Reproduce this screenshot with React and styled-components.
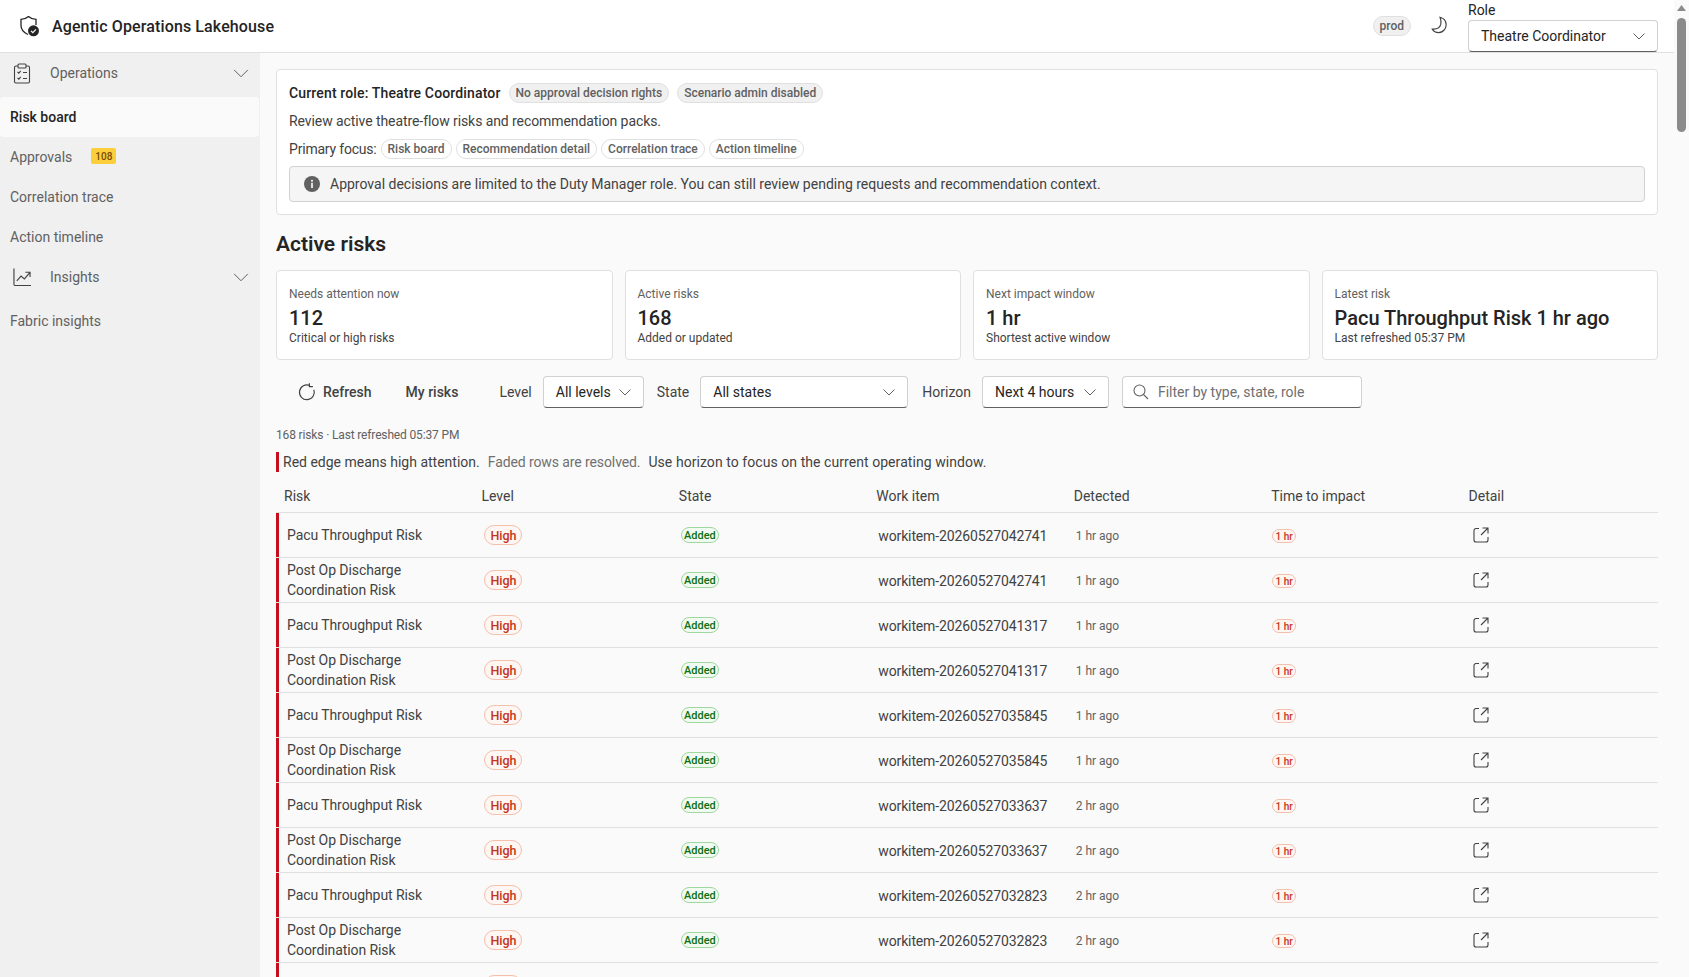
import React from "react";
import styled, { createGlobalStyle } from "styled-components";

const Global = createGlobalStyle`
  html, body { margin: 0; padding: 0; height: 100%; overflow: hidden; background: #fafafa; }
  body { font-family: "Roboto", "Liberation Sans", sans-serif; font-size: 14px; color: #424242; }
  * { box-sizing: border-box; }
`;

const Shell = styled.div`display: grid; grid-template-columns: 1fr 15px; height: 100vh; overflow: hidden;`;
const Page = styled.div`display: flex; flex-direction: column; min-width: 0; height: 100%;`;

const TopBar = styled.header`
  display: flex; align-items: flex-start; height: 53px; flex: none; background: #fff; border-bottom: 1px solid #e0e0e0;
  padding: 0 16px 0 18px;
`;
const Brand = styled.div`display: flex; align-items: center; gap: 12px; height: 52px; flex: 1;`;
const BrandTitle = styled.div`font-size: 16px; font-weight: 500; color: #242424; letter-spacing: 0.12px;`;
const EnvChip = styled.div`
  height: 20px; margin-top: 16px; padding: 0 6px; display: flex; align-items: center; border-radius: 10px;
  background: #f0f0f0; border: 1px solid #e0e0e0; color: #616161; font-size: 12px; font-weight: 500;
`;
const ThemeButton = styled.div`display: flex; margin: 16px 20px 0 20px; color: #424242;`;
const RoleField = styled.div`display: flex; flex-direction: column; width: 190px;`;
const RoleLabel = styled.div`font-size: 14px; line-height: 20px; color: #242424;`;

const Select = styled.div`
  display: flex; align-items: center; justify-content: space-between; height: 32px; width: ${p => p.$w}px; flex: none;
  padding: 0 10px 0 12px; background: #fff; border: 1px solid #d1d1d1; border-bottom-color: #616161; border-radius: 4px;
  color: #242424; font-size: 14px;
`;

const Body = styled.div`display: grid; grid-template-columns: 260px 1fr; flex: 1; min-height: 0;`;
const Side = styled.nav`background: #f0f0f0; display: flex; flex-direction: column; overflow: hidden;`;
const GroupHead = styled.div`
  display: flex; align-items: center; height: 40px; margin-bottom: 4px; padding: 0 9px 0 13px; color: #616161; font-size: 14px;
`;
const GroupLabel = styled.span`flex: 1; margin-left: 19px;`;
const NavItem = styled.div`
  display: flex; align-items: center; height: 40px; padding-left: 10px; margin-right: 1px; border-radius: 4px; font-size: 14px;
  color: ${p => (p.$active ? "#242424" : "#616161")};
  background: ${p => (p.$active ? "#fafafa" : "transparent")};
  font-weight: ${p => (p.$active ? 500 : 400)};
`;
const CountBadge = styled.span`
  margin: -2px 0 0 19px; height: 16px; padding: 0 4px; display: inline-flex; align-items: center; border-radius: 2px;
  background: #fbce3c; color: #7a4a00; font-size: 10px; font-weight: 500;
`;

const Main = styled.main`padding: 16px 16px 0; min-width: 0; overflow: hidden;`;
const RoleCard = styled.section`
  background: #fff; border: 1px solid #e0e0e0; border-radius: 4px; padding: 13px 12px 0; height: 146px;
`;
const InfoLine = styled.div`display: flex; align-items: center; gap: ${p => p.$gap || 8}px; height: 20px; margin-bottom: 8px; white-space: nowrap;`;
const Strong = styled.span`font-weight: 500; color: #242424; font-size: 14px; letter-spacing: 0.15px;`;
const Sentence = styled.span`letter-spacing: -0.08px;`;
const Focus = styled.span`color: #424242; letter-spacing: -0.2px;`;
const Chip = styled.span`
  display: inline-flex; align-items: center; height: 20px; padding: 0 6px; border-radius: 10px; font-size: 12px; font-weight: 500; color: #616161;
  border: 1px solid #e0e0e0; background: ${p => (p.$filled ? "#f0f0f0" : "#fff")};
`;
const Notice = styled.div`
  display: flex; align-items: center; gap: 10px; height: 36px; margin-top: -1px; padding: 0 14px; background: #f5f5f5;
  border: 1px solid #d1d1d1; border-radius: 4px; color: #424242; font-size: 14px;
`;
const Heading = styled.h1`margin: 15px 0 12px; font-size: 21px; line-height: 28px; font-weight: 600; color: #242424;`;

const KpiGrid = styled.div`display: grid; grid-template-columns: repeat(4, 1fr); gap: 12px; margin-bottom: 16px;`;
const Kpi = styled.div`
  height: 90px; padding: 15px 12px 0; background: #fff; border: 1px solid #e0e0e0; border-radius: 4px; display: flex; flex-direction: column;
`;
const KpiLabel = styled.div`font-size: 12px; line-height: 16px; color: #616161;`;
const KpiValue = styled.div`font-size: 20px; line-height: 26px; font-weight: 500; color: #242424; margin-top: 3px;`;
const KpiNote = styled.div`font-size: 12px; line-height: 16px; color: #424242; margin-top: -1px;`;

const Toolbar = styled.div`display: flex; align-items: center; height: 32px; white-space: nowrap;`;
const ToolButton = styled.div`
  display: flex; align-items: center; gap: 6px; font-weight: 500; color: #424242; font-size: 14px; margin-left: ${p => p.$ml}px;
`;
const ToolLabel = styled.span`color: #424242; font-size: 14px; margin: 0 11px 0 ${p => p.$ml}px;`;
const SearchBox = styled.div`
  display: flex; align-items: center; gap: 9px; height: 32px; width: 240px; margin-left: 13px; padding: 0 10px; background: #fff;
  border: 1px solid #d1d1d1; border-bottom-color: #616161; border-radius: 4px; color: #707070; font-size: 14px;
`;
const Meta = styled.div`margin-top: 19px; font-size: 12px; line-height: 16px; color: #616161; letter-spacing: -0.15px;`;
const Legend = styled.div`
  display: flex; gap: 8px; height: 20px; margin-top: 9px; padding-left: 4px; border-left: 3px solid #c50f1f;
  line-height: 20px; font-size: 14px; color: #424242;
`;
const Muted = styled.span`color: #707070; letter-spacing: -0.1px;`;
const Hint = styled.span`letter-spacing: 0.06px;`;

const Table = styled.div`margin-top: 8px;`;
const Row = styled.div`
  display: grid; grid-template-columns: repeat(7, 1fr); height: ${p => (p.$head ? 33 : 45)}px; align-items: center; border-bottom: 1px solid #e0e0e0;
  box-shadow: ${p => (p.$head ? "none" : "inset 3px 0 0 #c50f1f")};
`;
const HeadCell = styled.div`font-size: 14px; color: #424242; padding-left: 8px;`;
const Cell = styled.div`padding-left: ${p => p.$pl ?? 10}px; font-size: 14px; line-height: 20px; color: #424242; min-width: 0; display: flex; align-items: center;`;
const RiskName = styled.div`width: 170px; letter-spacing: -0.08px;`;
const WorkItem = styled.span`letter-spacing: -0.13px; margin-top: 1px;`;
const Small = styled.span`font-size: 12px; color: #616161; margin-top: 1px;`;
const Pill = styled.span`
  display: inline-flex; align-items: center; justify-content: center; border-radius: 10px; border: 1px solid ${p => p.$line}; background: ${p => p.$bg}; color: ${p => p.$fg};
  height: ${p => p.$h}px; width: ${p => p.$w}px; font-size: ${p => p.$fs}px; font-weight: 500; padding-top: 1px; margin-top: ${p => p.$mt || 0}px;
`;

const Track = styled.div`display: flex; flex-direction: column; align-items: center; height: 100%; background: #fafafa; padding-top: 5px;`;
const Thumb = styled.div`width: 9px; height: 114px; margin-top: 7px; border-radius: 5px; background: #8b8b8b;`;
const TrackSpace = styled.div`flex: 1;`;
const Arrow = styled.svg`display: block; flex: none; margin-bottom: ${p => p.$mb || 0}px;`;

const Chevron = ({ size = 16 }) => (
  <svg width={size} height={size} viewBox="0 0 16 16" fill="none" stroke="#616161" strokeWidth={size > 16 ? 0.8 : 1}><path d="M2.500 5.500 8 11l5.500-5.500" /></svg>
);
const Logo = () => (
  <svg width="22" height="22" viewBox="0 0 22 22" fill="none">
    <path d="M10.500 1.500c2 1.800 4.600 2.800 7.500 2.900V10M10.500 1.500C8.500 3.300 5.800 4.300 3 4.400V10.500c0 4 2.500 7 7 9" stroke="#242424" strokeWidth="1.300" />
    <circle cx="15.500" cy="15.800" r="5.500" fill="#242424" />
    <path d="m13 15.900 1.800 1.800 3.200-3.400" stroke="#fff" strokeWidth="1.200" />
  </svg>
);
const Moon = () => (
  <svg width="17" height="19" viewBox="0 0 16 18" fill="none" stroke="#424242" strokeWidth="1.100">
    <path d="M8.500 1.200c3.200.5 5.800 3.400 5.800 7.100 0 4-3.100 7.400-7.100 7.400-2.600 0-4.900-1.400-6-3.300 3.800.3 7.200-1.300 8-4.400.5-2.200.2-4.600-.7-6.800Z" />
  </svg>
);
const TaskIcon = () => (
  <svg width="18" height="21" viewBox="0 0 18 21" fill="none" stroke="#424242" strokeWidth="1.100">
    <path d="M5 3H3a1.500 1.500 0 0 0-1.500 1.500v14A1.500 1.500 0 0 0 3 20h12a1.500 1.500 0 0 0 1.500-1.500v-14A1.500 1.500 0 0 0 15 3h-2" />
    <rect x="5" y="1" width="8" height="4" rx="1" />
    <path d="m4.500 8.800 1.300 1.300 2-2.300M4.500 14.800l1.300 1.300 2-2.300M10 9.500h4M10 15.500h4" />
  </svg>
);
const TrendIcon = () => (
  <svg width="18" height="19" viewBox="0 0 19 19" fill="none" stroke="#424242" strokeWidth="1.200">
    <path d="M1 0v16.500a1.500 1.500 0 0 0 1.500 1.500H19" />
    <path d="m4 13 4.500-5 3.500 3 5.500-6.500M13 4h5v5" />
  </svg>
);
const InfoIcon = () => (
  <svg width="16" height="16" viewBox="0 0 16 16"><circle cx="8" cy="8" r="8" fill="#616161" /><rect x="7.200" y="6.800" width="1.600" height="5.200" fill="#fff" /><circle cx="8" cy="4.800" r="1" fill="#fff" /></svg>
);
const RefreshIcon = () => (
  <svg width="19" height="19" viewBox="0 0 18 18" fill="none" stroke="#424242" strokeWidth="1.100">
    <path d="M15 6.400A7 7 0 1 1 11.300 2.400" /><path d="M10.800 .3v3.200h3.300" />
  </svg>
);
const SearchIcon = () => (
  <svg width="16" height="16" viewBox="0 0 16 16" fill="none" stroke="#616161" strokeWidth="1.100"><circle cx="6.500" cy="6.500" r="5.500" /><path d="m10.500 10.500 4.500 4.500" /></svg>
);
const OpenIcon = () => (
  <svg width="16" height="16" viewBox="0 0 16 16" fill="none" stroke="#424242" strokeWidth="1.100">
    <path d="M6 1.500H3A2 2 0 0 0 1 3.500v9.500a2 2 0 0 0 2 2h10a2 2 0 0 0 2-2v-3" /><path d="M9.500 1h5.500v5.500M15 1 8 8" />
  </svg>
);

const rows = [
  ["Pacu Throughput Risk", "workitem-20260527042741", "1 hr ago"],
  ["Post Op Discharge Coordination Risk", "workitem-20260527042741", "1 hr ago"],
  ["Pacu Throughput Risk", "workitem-20260527041317", "1 hr ago"],
  ["Post Op Discharge Coordination Risk", "workitem-20260527041317", "1 hr ago"],
  ["Pacu Throughput Risk", "workitem-20260527035845", "1 hr ago"],
  ["Post Op Discharge Coordination Risk", "workitem-20260527035845", "1 hr ago"],
  ["Pacu Throughput Risk", "workitem-20260527033637", "2 hr ago"],
  ["Post Op Discharge Coordination Risk", "workitem-20260527033637", "2 hr ago"],
  ["Pacu Throughput Risk", "workitem-20260527032823", "2 hr ago"],
  ["Post Op Discharge Coordination Risk", "workitem-20260527032823", "2 hr ago"],
  ["Pacu Throughput Risk", "workitem-20260527032823", "2 hr ago"],
];
const heads = ["Risk", "Level", "State", "Work item", "Detected", "Time to impact", "Detail"];
const kpis = [
  ["Needs attention now", "112", "Critical or high risks"],
  ["Active risks", "168", "Added or updated"],
  ["Next impact window", "1 hr", "Shortest active window"],
  ["Latest risk", "Pacu Throughput Risk 1 hr ago", "Last refreshed 05:37 PM"],
];

export default function App() {
  return (
    <Shell>
      <Global />
      <Page>
        <TopBar>
          <Brand><Logo /><BrandTitle>Agentic Operations Lakehouse</BrandTitle></Brand>
          <EnvChip>prod</EnvChip>
          <ThemeButton><Moon /></ThemeButton>
          <RoleField>
            <RoleLabel>Role</RoleLabel>
            <Select $w={190}>Theatre Coordinator<Chevron /></Select>
          </RoleField>
        </TopBar>
        <Body>
          <Side>
            <GroupHead><TaskIcon /><GroupLabel>Operations</GroupLabel><Chevron size={20} /></GroupHead>
            <NavItem $active>Risk board</NavItem>
            <NavItem>Approvals<CountBadge>108</CountBadge></NavItem>
            <NavItem>Correlation trace</NavItem>
            <NavItem>Action timeline</NavItem>
            <GroupHead><TrendIcon /><GroupLabel>Insights</GroupLabel><Chevron size={20} /></GroupHead>
            <NavItem>Fabric insights</NavItem>
          </Side>
          <Main>
            <RoleCard>
              <InfoLine>
                <Strong>Current role: Theatre Coordinator</Strong>
                <Chip $filled>No approval decision rights</Chip>
                <Chip $filled>Scenario admin disabled</Chip>
              </InfoLine>
              <InfoLine><Sentence>Review active theatre-flow risks and recommendation packs.</Sentence></InfoLine>
              <InfoLine $gap={4}>
                <Focus>Primary focus:</Focus>
                <Chip>Risk board</Chip><Chip>Recommendation detail</Chip><Chip>Correlation trace</Chip><Chip>Action timeline</Chip>
              </InfoLine>
              <Notice><InfoIcon />Approval decisions are limited to the Duty Manager role. You can still review pending requests and recommendation context.</Notice>
            </RoleCard>
            <Heading>Active risks</Heading>
            <KpiGrid>
              {kpis.map(k => (
                <Kpi key={k[0]}><KpiLabel>{k[0]}</KpiLabel><KpiValue>{k[1]}</KpiValue><KpiNote>{k[2]}</KpiNote></Kpi>
              ))}
            </KpiGrid>
            <Toolbar>
              <ToolButton $ml={22}><RefreshIcon />Refresh</ToolButton>
              <ToolButton $ml={34}>My risks</ToolButton>
              <ToolLabel $ml={41}>Level</ToolLabel>
              <Select $w={101}>All levels<Chevron /></Select>
              <ToolLabel $ml={13}>State</ToolLabel>
              <Select $w={208}>All states<Chevron /></Select>
              <ToolLabel $ml={14}>Horizon</ToolLabel>
              <Select $w={127}>Next 4 hours<Chevron /></Select>
              <SearchBox><SearchIcon />Filter by type, state, role</SearchBox>
            </Toolbar>
            <Meta>168 risks · Last refreshed 05:37 PM</Meta>
            <Legend><span>Red edge means high attention.</span><Muted>Faded rows are resolved.</Muted><Hint>Use horizon to focus on the current operating window.</Hint></Legend>
            <Table>
              <Row $head>{heads.map(h => <HeadCell key={h}>{h}</HeadCell>)}</Row>
              {rows.map((r, i) => (
                <Row key={i}>
                  <Cell $pl={11}><RiskName>{r[0]}</RiskName></Cell>
                  <Cell $pl={11}><Pill $h={20} $w={38} $fs={12.5} $bg="#fdf6f3" $line="#f4bfab" $fg="#c4331a">High</Pill></Cell>
                  <Cell><Pill $h={16} $w={38} $fs={11} $bg="#f1faf1" $line="#9fd89f" $fg="#0e700e">Added</Pill></Cell>
                  <Cell><WorkItem>{r[1]}</WorkItem></Cell>
                  <Cell><Small>{r[2]}</Small></Cell>
                  <Cell $pl={9}><Pill $h={14} $w={24} $fs={10} $mt={2} $bg="#fdf6f3" $line="#f4bfab" $fg="#c4331a">1 hr</Pill></Cell>
                  <Cell $pl={12}><OpenIcon /></Cell>
                </Row>
              ))}
            </Table>
          </Main>
        </Body>
      </Page>
      <Track>
        <Arrow width="9" height="6" viewBox="0 0 9 6"><path d="M4.500 0 9 6H0Z" fill="#8b8b8b" /></Arrow>
        <Thumb />
        <TrackSpace />
        <Arrow width="9" height="6" viewBox="0 0 9 6" $mb={5}><path d="M4.500 6 9 0H0Z" fill="#8b8b8b" /></Arrow>
      </Track>
    </Shell>
  );
}
